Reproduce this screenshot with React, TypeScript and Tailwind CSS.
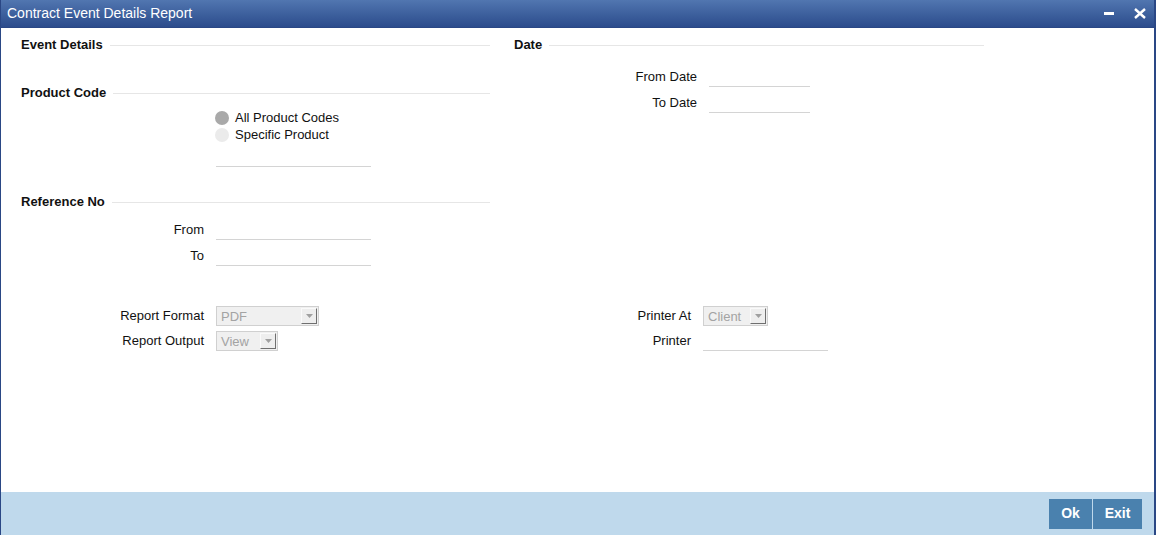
import React from "react";

const font = { fontFamily: '"Liberation Sans", Arial, sans-serif' };

function SectionHeader({ title }: { title: string }) {
  return (
    <div className="flex h-[20px] items-center">
      <span className="text-[13px] font-bold text-[#111]">{title}</span>
      <div className="ml-[7px] h-px flex-1 bg-[#e6e6e6]" />
    </div>
  );
}

function LineInput({ w }: { w: string }) {
  return <div className={`h-[20px] border-b border-[#d4d4d4] ${w}`} />;
}

function Select({ value, w }: { value: string; w: string }) {
  return (
    <div
      className={`flex h-[20px] items-center justify-between border border-[#d0d0d0] bg-[#f0f0f0] pl-[4px] pr-px ${w}`}
    >
      <span className="text-[13px] leading-none text-[#a3a3a3]">{value}</span>
      <div className="flex h-[16px] w-[16px] items-center justify-center border-b border-r border-t border-l border-b-[#6f6f6f] border-r-[#6f6f6f] border-t-[#fafafa] border-l-[#fafafa] bg-[#eeeeee]">
        <svg width="7" height="4" viewBox="0 0 7 4">
          <path d="M0 0 H7 L3.5 4 Z" fill="#a0a0a0" />
        </svg>
      </div>
    </div>
  );
}

function Row({
  label,
  labelW,
  children,
  className = "",
}: {
  label: string;
  labelW: string;
  children: React.ReactNode;
  className?: string;
}) {
  return (
    <div className={`flex items-center ${className}`}>
      <div className={`text-right text-[13px] text-[#111] ${labelW}`}>{label}</div>
      <div className="ml-[12px]">{children}</div>
    </div>
  );
}

export default function App() {
  return (
    <div className="h-[541px] w-[1156px] bg-white" style={font}>
      <div className="flex h-[535px] w-[1156px] flex-col border-l border-r-2 border-[#2a4785]">
        {/* Title bar */}
        <div className="flex h-[28px] items-center justify-between border-b border-[#2a4785] bg-gradient-to-b from-[#5176b0] to-[#2c4c8c] pl-[6px] pr-[6px]">
          <span className="text-[14px] text-white">Contract Event Details Report</span>
          <div className="flex items-center">
            <svg width="10" height="4" viewBox="0 0 10 4" className="mr-[20px] mt-[1px]">
              <rect x="0" y="0" width="10" height="3" fill="white" />
            </svg>
            <svg width="12" height="11" viewBox="0 0 12 11" className="mr-[2px]">
              <path d="M1 1 L11 10 M11 1 L1 10" stroke="white" strokeWidth="2.4" />
            </svg>
          </div>
        </div>

        {/* Body */}
        <div className="flex-1 pl-[20px] pt-[7px]">
          <div className="flex">
            {/* Left column */}
            <div className="flex w-[469px] flex-col">
              <SectionHeader title="Event Details" />
              <div className="mt-[28px]">
                <SectionHeader title="Product Code" />
              </div>
              <div className="ml-[194px] mt-[6px] flex flex-col">
                <div className="flex h-[17px] items-center">
                  <div className="h-[14px] w-[14px] rounded-full bg-[#a9a9a9]" />
                  <span className="ml-[6px] text-[13px] text-[#111]">All Product Codes</span>
                </div>
                <div className="flex h-[17px] items-center">
                  <div className="h-[14px] w-[14px] rounded-full bg-[#ebebeb]" />
                  <span className="ml-[6px] text-[13px] text-[#111]">Specific Product</span>
                </div>
              </div>
              <div className="ml-[195px] mt-[4px]">
                <LineInput w="w-[155px]" />
              </div>
              <div className="mt-[25px]">
                <SectionHeader title="Reference No" />
              </div>
              <Row label="From" labelW="w-[183px]" className="mt-[8px]">
                <LineInput w="w-[155px]" />
              </Row>
              <Row label="To" labelW="w-[183px]" className="mt-[6px]">
                <LineInput w="w-[155px]" />
              </Row>
            </div>

            {/* Right column */}
            <div className="ml-[24px] flex w-[470px] flex-col">
              <SectionHeader title="Date" />
              <Row label="From Date" labelW="w-[183px]" className="mt-[12px]">
                <LineInput w="w-[101px]" />
              </Row>
              <Row label="To Date" labelW="w-[183px]" className="mt-[6px]">
                <LineInput w="w-[101px]" />
              </Row>
            </div>
          </div>

          {/* Report options */}
          <div className="mt-[40px] flex">
            <div className="flex w-[469px] flex-col">
              <Row label="Report Format" labelW="w-[183px]">
                <Select value="PDF" w="w-[103px]" />
              </Row>
              <Row label="Report Output" labelW="w-[183px]" className="mt-[5px]">
                <Select value="View" w="w-[62px]" />
              </Row>
            </div>
            <div className="ml-[24px] flex w-[470px] flex-col">
              <Row label="Printer At" labelW="w-[177px]">
                <Select value="Client" w="w-[65px]" />
              </Row>
              <Row label="Printer" labelW="w-[177px]" className="mt-[5px]">
                <LineInput w="w-[125px]" />
              </Row>
            </div>
          </div>
        </div>

        {/* Footer */}
        <div className="flex h-[43px] items-center justify-end bg-[#bfd9ec] pr-[12px]">
          <button className="h-[30px] w-[43px] bg-[#4a81ae] text-[14px] font-bold text-white">
            Ok
          </button>
          <button className="ml-px h-[30px] w-[49px] bg-[#4a81ae] text-[14px] font-bold text-white">
            Exit
          </button>
        </div>
      </div>
    </div>
  );
}
